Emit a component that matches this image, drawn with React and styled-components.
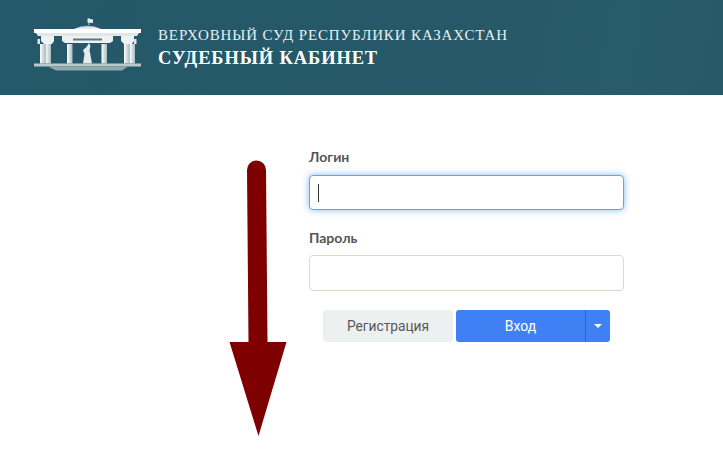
import styled, { createGlobalStyle } from "styled-components";

const Global = createGlobalStyle`
  html, body {
    margin: 0;
    background: #fff;
    overflow: hidden;
  }
`;

const Page = styled.div`
  position: relative;
  width: 723px;
  height: 459px;
  font-family: Lato, "Liberation Sans", sans-serif;
`;

const Header = styled.header`
  height: 95px;
  box-sizing: border-box;
  padding: 17px 0 0 33px;
  display: flex;
  align-items: flex-start;
  gap: 15px;
  background: linear-gradient(100deg, #24586a 0%, #265868 65%, #285b6b 85%, #27596b 100%);
`;

const Titles = styled.div`
  padding-top: 9px;
  font-family: "Liberation Serif", serif;
  color: #fff;
`;

const Court = styled.div`
  font-size: 15px;
  line-height: 19px;
  letter-spacing: 0.86px;
  color: #e6eff2;
  white-space: nowrap;
`;

const Cabinet = styled.div`
  margin-top: 1px;
  font-size: 18.5px;
  line-height: 24px;
  font-weight: 700;
  letter-spacing: 0.87px;
  white-space: nowrap;
`;

const Main = styled.main`
  width: 315px;
  margin-left: 309px;
  padding-top: 53px;
`;

const Field = styled.div`
  margin-bottom: 19px;
`;

const Label = styled.label`
  display: block;
  margin-bottom: ${(p) => (p.$tight ? "9px" : "10px")};
  font-size: 14px;
  line-height: 17px;
  font-weight: 700;
  color: #555;
`;

const InputBox = styled.div`
  position: relative;
  box-sizing: border-box;
  height: ${(p) => (p.$focus ? "35px" : "36px")};
  border-radius: 4px;
  background: #fff;
  border: 1px solid ${(p) => (p.$focus ? "#6aa5d8" : "#dedac4")};
  box-shadow: ${(p) => (p.$focus ? "0 0 7px rgba(80, 160, 235, 0.7)" : "none")};
`;

const Caret = styled.span`
  position: absolute;
  left: 8px;
  top: 8px;
  width: 1px;
  height: 18px;
  background: #333;
`;

const Actions = styled.div`
  display: flex;
  margin: 1px 0 0 14px;
`;

const SecondaryButton = styled.button`
  width: 130px;
  height: 32px;
  margin-right: 3px;
  padding: 0;
  border: 0;
  border-radius: 3px;
  background: #edf0f1;
  color: #55595b;
  font-family: Roboto, "Liberation Sans", sans-serif;
  font-size: 13.75px;
`;

const PrimaryButton = styled.button`
  width: 129px;
  height: 32px;
  padding: 0;
  border: 0;
  border-radius: 3px 0 0 3px;
  background: #3f81f4;
  color: #fff;
  font-family: Roboto, "Liberation Sans", sans-serif;
  font-size: 14px;
`;

const DropButton = styled.button`
  width: 25px;
  height: 32px;
  padding: 0;
  border: 0;
  border-left: 1px solid #2f66c4;
  border-radius: 0 3px 3px 0;
  background: #3f81f4;
  display: flex;
  align-items: center;
  justify-content: center;
`;

const DropCaret = styled.span`
  width: 0;
  height: 0;
  border-left: 4.5px solid transparent;
  border-right: 4.5px solid transparent;
  border-top: 4.5px solid #fff;
`;

const ArrowMark = styled.svg`
  position: absolute;
  left: 225px;
  top: 155px;
`;

function Logo() {
  const columns = [40, 45.5, 67, 101.5, 124, 129.5];
  return (
    <svg width="110" height="56" viewBox="33 17 110 56">
      <defs>
        <linearGradient id="col" x1="0" x2="1" y1="0" y2="0">
          <stop offset="0" stopColor="#ffffff" />
          <stop offset="1" stopColor="#a9bcc1" />
        </linearGradient>
        <linearGradient id="dome" x1="0" x2="0" y1="0" y2="1">
          <stop offset="0" stopColor="#b4c5ca" />
          <stop offset="1" stopColor="#f4f7f8" />
        </linearGradient>
      </defs>
      <rect x="88.5" y="18" width="0.8" height="7" fill="#dfe7e9" />
      <path d="M87.5 18.5 L93 19.5 L93 23 L87.5 22.5 Z" fill="#e8eeef" />
      <path d="M74 29 Q88 22.5 101 29 Z" fill="url(#dome)" />
      <rect x="34" y="29" width="107" height="4" fill="#fff" />
      <path d="M36 33 H139 L137 36 H38 Z" fill="#dfe7e9" />
      <path d="M41 36 H54 V41 L52 44 H44 L41 41 Z" fill="#eef2f3" />
      <path d="M62 36 H113 V41 L110 43 H65 L62 41 Z" fill="#eef2f3" />
      <path d="M121 36 H134 V41 L132 44 H124 L121 41 Z" fill="#eef2f3" />
      <rect x="73" y="38.5" width="29" height="2" fill="#59777f" />
      {columns.map((x) => (
        <rect key={x} x={x} y="44" width="5.5" height="19.5" fill="url(#col)" />
      ))}
      <rect x="37.5" y="39" width="2.5" height="5" fill="#dfe6e8" />
      <rect x="134" y="39" width="2.5" height="5" fill="#dfe6e8" />
      <path d="M89 43 L90.5 46 L89.5 50 L92 63.5 H83 L84.5 54 L83 50 L86.5 47 Z" fill="#e6ecee" />
      <rect x="34" y="63.5" width="107" height="3" fill="#b9cacd" />
      <path d="M48 66.5 H128 L122 70.5 H56 Z" fill="#8ea9ae" />
    </svg>
  );
}

export default function App() {
  return (
    <Page>
      <Global />
      <Header>
        <Logo />
        <Titles>
          <Court>ВЕРХОВНЫЙ СУД РЕСПУБЛИКИ КАЗАХСТАН</Court>
          <Cabinet>СУДЕБНЫЙ КАБИНЕТ</Cabinet>
        </Titles>
      </Header>
      <Main>
        <Field>
          <Label>Логин</Label>
          <InputBox $focus>
            <Caret />
          </InputBox>
        </Field>
        <Field>
          <Label $tight>Пароль</Label>
          <InputBox />
        </Field>
        <Actions>
          <SecondaryButton>Регистрация</SecondaryButton>
          <PrimaryButton>Вход</PrimaryButton>
          <DropButton>
            <DropCaret />
          </DropButton>
        </Actions>
      </Main>
      <ArrowMark width="70" height="290" viewBox="225 155 70 290">
        <path
          d="M247 170 A9.5 9.5 0 0 1 266 170 L267.5 342 H286.5 L258.5 436 L229.5 342 H248.5 Z"
          fill="#7f0000"
        />
      </ArrowMark>
    </Page>
  );
}
